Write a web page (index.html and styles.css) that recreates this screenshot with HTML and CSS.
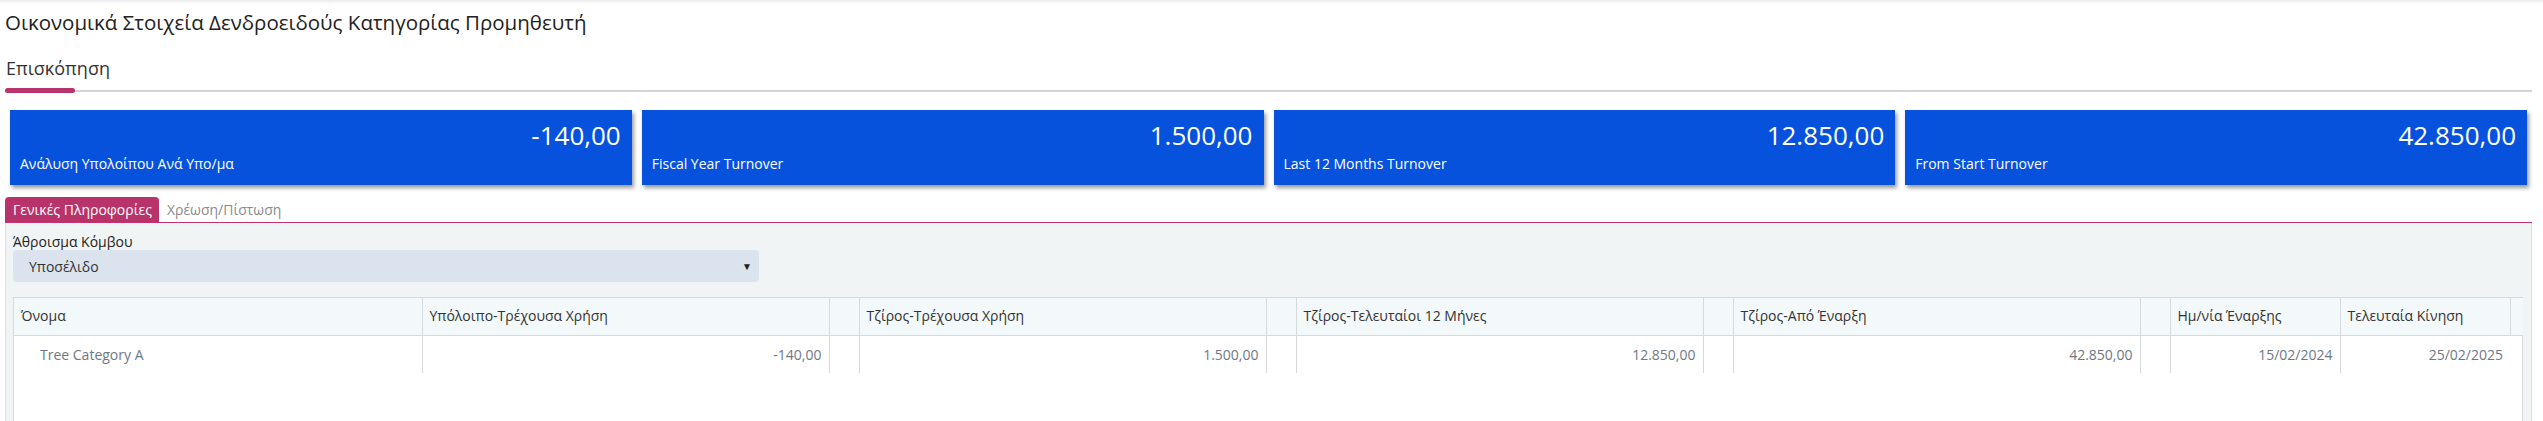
FILE: index.html
```html
<!DOCTYPE html>
<html>
  <head>
    <meta charset="utf-8" />
    <title>Οικονομικά Στοιχεία Δενδροειδούς Κατηγορίας Προμηθευτή</title>
    <link rel="stylesheet" href="styles.css">
  </head>
  <body>
    <div class="page">
      <h1 class="page-title">Οικονομικά Στοιχεία Δενδροειδούς Κατηγορίας Προμηθευτή</h1>

      <div class="section-tabs">
        <span class="section-tab active">Επισκόπηση</span>
      </div>

      <div class="cards">
        <div class="card">
          <div class="card-value">-140,00</div>
          <div class="card-label">Ανάλυση Υπολοίπου Ανά Υπο/μα</div>
        </div>
        <div class="card">
          <div class="card-value">1.500,00</div>
          <div class="card-label">Fiscal Year Turnover</div>
        </div>
        <div class="card">
          <div class="card-value">12.850,00</div>
          <div class="card-label">Last 12 Months Turnover</div>
        </div>
        <div class="card">
          <div class="card-value">42.850,00</div>
          <div class="card-label">From Start Turnover</div>
        </div>
      </div>

      <div class="tabs">
        <span class="tab active">Γενικές Πληροφορίες</span>
        <span class="tab">Χρέωση/Πίστωση</span>
      </div>

      <div class="tab-panel">
        <label class="field-label" for="node-sum">Άθροισμα Κόμβου</label>
        <div class="select" id="node-sum">
          <span>Υποσέλιδο</span>
          <span class="caret">&#9660;</span>
        </div>

        <div class="grid-wrapper">
          <table class="grid">
            <colgroup>
              <col class="col-name" />
              <col class="col-amount" />
              <col class="col-gap" />
              <col class="col-amount" />
              <col class="col-gap" />
              <col class="col-amount" />
              <col class="col-gap" />
              <col class="col-amount" />
              <col class="col-gap" />
              <col class="col-date" />
              <col class="col-date" />
              <col class="col-scroll" />
            </colgroup>
            <thead>
              <tr>
                <th>Όνομα</th>
                <th>Υπόλοιπο-Τρέχουσα Χρήση</th>
                <th></th>
                <th>Τζίρος-Τρέχουσα Χρήση</th>
                <th></th>
                <th>Τζίρος-Τελευταίοι 12 Μήνες</th>
                <th></th>
                <th>Τζίρος-Από Έναρξη</th>
                <th></th>
                <th>Ημ/νία Έναρξης</th>
                <th>Τελευταία Κίνηση</th>
                <th class="scroll-cell"></th>
              </tr>
            </thead>
            <tbody>
              <tr>
                <td class="tree-name">Tree Category A</td>
                <td class="num">-140,00</td>
                <td></td>
                <td class="num">1.500,00</td>
                <td></td>
                <td class="num">12.850,00</td>
                <td></td>
                <td class="num">42.850,00</td>
                <td></td>
                <td class="num">15/02/2024</td>
                <td class="num last">25/02/2025</td>
                <td class="scroll-cell"></td>
              </tr>
            </tbody>
          </table>
        </div>
      </div>
    </div>
  </body>
</html>
```

FILE: styles.css
```css
html,
body {
  margin: 0;
  padding: 0;
}
body {
  background: linear-gradient(#ececec, #fff 4px) no-repeat;
  background-color: #fff;
  color: #333;
  font-family: "Open Sans", "Noto Sans", sans-serif;
  font-size: 14px;
  overflow: hidden;
}
.page {
  padding: 6px 11px 0 5px;
}

/* page header */
.page-title {
  margin: 0;
  font-size: 20.5px;
  font-weight: normal;
  line-height: 32px;
  color: #222;
}
.section-tabs {
  margin-top: 18px;
  border-bottom: 2px solid #d4d4d4;
}
.section-tab {
  display: inline-block;
  position: relative;
  padding: 0 0 10px 1px;
  font-size: 18px;
  line-height: 24px;
  color: #333;
}
.section-tab.active::after {
  content: "";
  position: absolute;
  left: 0;
  bottom: -3px;
  width: 70px;
  height: 5px;
  border-radius: 3px;
  background-color: #b8336a;
}

/* summary cards */
.cards {
  display: flex;
  gap: 10px;
  margin: 18px 5px 0 5px;
}
.card {
  flex: 1;
  height: 75px;
  box-sizing: border-box;
  padding: 8px 11px 0 10px;
  background-color: #0652dd;
  color: #fff;
  box-shadow: 2px 3px 4px rgba(0, 0, 0, 0.4);
}
.card-value {
  text-align: right;
  font-size: 26px;
  line-height: 34px;
}
.card-label {
  margin-top: 2px;
  font-size: 14px;
  line-height: 19px;
}

/* tabs */
.tabs {
  display: flex;
  margin-top: 12px;
  border-bottom: 1px solid #c2336c;
}
.tab {
  padding: 0 7px 0 8px;
  line-height: 25px;
  color: #8a8a8a;
  border-radius: 4px 4px 0 0;
}
.tab.active {
  background-color: #b8336a;
  color: #fff;
}
.tab-panel {
  display: flex;
  flex-direction: column;
  padding: 10px 8px 0 7px;
  background-color: #f0f4f5;
  border-left: 1px solid #dcdfe1;
  border-right: 1px solid #dcdfe1;
}
.field-label {
  line-height: 17px;
  color: #222;
}
.select {
  display: flex;
  justify-content: space-between;
  align-items: center;
  width: 746px;
  height: 32px;
  box-sizing: border-box;
  padding: 0 7px 0 16px;
  background-color: #dbe3ee;
  border-radius: 4px;
  color: #333;
}
.caret {
  font-size: 10px;
  color: #222;
}

/* grid */
.grid-wrapper {
  margin-top: 15px;
  min-height: 160px;
  background-color: #fff;
  border: 1px solid #d5d9dc;
}
.grid {
  width: 100%;
  table-layout: fixed;
  border-collapse: collapse;
}
.col-name {
  width: 408px;
}
.col-amount {
  width: 407px;
}
.col-gap {
  width: 30px;
}
.col-date {
  width: 170px;
}
.col-scroll {
  width: 13px;
}
.grid th {
  height: 35px;
  padding: 0 7px 2px 7px;
  background-color: #f3f8fa;
  border-right: 1px solid #d5d9dc;
  border-bottom: 1px solid #d5d9dc;
  text-align: left;
  font-weight: normal;
  color: #333;
  white-space: nowrap;
  overflow: hidden;
}
.grid th:last-child {
  border-right: none;
}
.grid td {
  height: 37px;
  padding: 0 7px;
  border-right: 1px solid #d5d9dc;
  color: #6e7786;
  white-space: nowrap;
}
.grid td.last,
.grid td.scroll-cell {
  border-right: none;
}
.grid td.num {
  text-align: right;
}
.grid td.tree-name {
  padding-left: 26px;
}
```
